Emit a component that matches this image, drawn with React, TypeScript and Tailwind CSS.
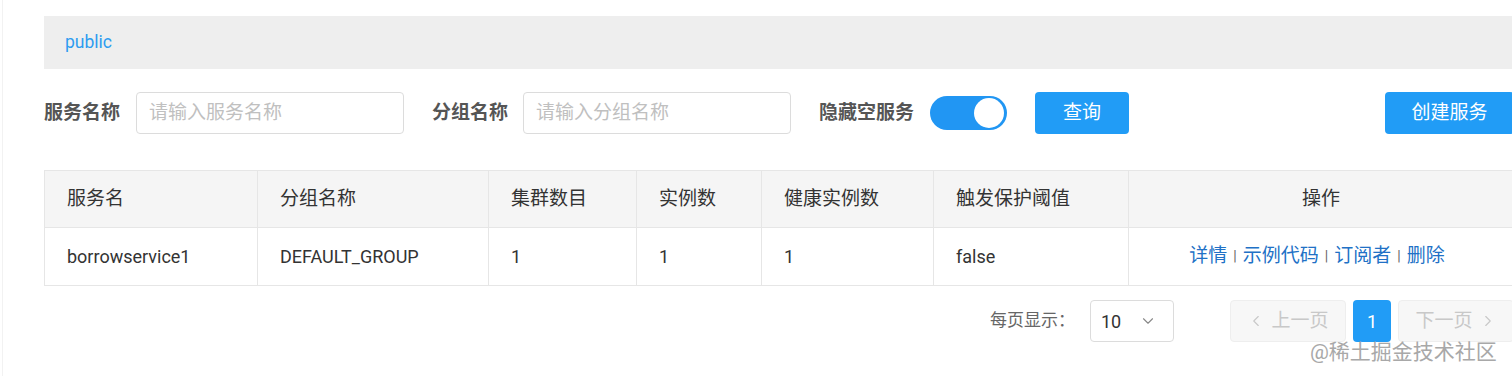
import { ChevronDown, ChevronLeft, ChevronRight } from 'lucide-react'

const FONT = "font-['Roboto','Noto_Sans_CJK_SC',sans-serif]"

const columns = [
  { title: '服务名', width: 'w-[213px]' },
  { title: '分组名称', width: 'w-[231px]' },
  { title: '集群数目', width: 'w-[148px]' },
  { title: '实例数', width: 'w-[125px]' },
  { title: '健康实例数', width: 'w-[172px]' },
  { title: '触发保护阈值', width: 'w-[195px]' },
]

const row = ['borrowservice1', 'DEFAULT_GROUP', '1', '1', '1', 'false']

function Label({ children }: { children: React.ReactNode }) {
  return <span className="text-[19px] font-bold text-[#555] whitespace-nowrap">{children}</span>
}

function TextInput({ placeholder }: { placeholder: string }) {
  return (
    <div className="w-[268px] h-[42px] border border-[#dcdcdc] rounded-[4px] flex items-center px-3 text-[19px] text-[#c0c0c0]">
      {placeholder}
    </div>
  )
}

export default function App() {
  const ops = ['详情', '示例代码', '订阅者', '删除']

  return (
    <div className={`relative w-[1512px] h-[376px] overflow-hidden bg-white ${FONT}`}>
      <div className="absolute left-[2px] top-0 bottom-0 w-px bg-[#f2f2f2]" />
      <div className="w-[1470px] ml-[44px] pt-[16px]">
        {/* breadcrumb bar */}
        <div className="h-[53px] bg-[#eeeeee] flex items-center pl-[21px]">
          <span className="text-[17.5px] text-[#2d9cf0]">public</span>
        </div>

        {/* filter row */}
        <div className="mt-[23px] h-[42px] flex items-center">
          <Label>服务名称</Label>
          <div className="ml-[16px]">
            <TextInput placeholder="请输入服务名称" />
          </div>
          <div className="ml-[28px]">
            <Label>分组名称</Label>
          </div>
          <div className="ml-[15px]">
            <TextInput placeholder="请输入分组名称" />
          </div>
          <div className="ml-[28px]">
            <Label>隐藏空服务</Label>
          </div>
          <div className="ml-[16px] w-[77px] h-[34px] rounded-full bg-[#2196f3] flex items-center justify-end pr-[3px]">
            <div className="w-[30px] h-[30px] rounded-full bg-white" />
          </div>
          <button className="ml-[28px] w-[94px] h-[42px] rounded-[4px] bg-[#219cf6] text-white text-[19px]">
            查询
          </button>
          <button className="ml-auto w-[129px] h-[42px] rounded-[4px] bg-[#219cf6] text-white text-[19px]">
            创建服务
          </button>
        </div>

        {/* table */}
        <div className="mt-[36px] border border-[#e6e6e6]">
          <div className="flex h-[57px] bg-[#f5f5f5] border-b border-[#e6e6e6] text-[19px] text-[#333]">
            {columns.map((c) => (
              <div key={c.title} className={`${c.width} shrink-0 border-r border-[#e6e6e6] flex items-center pl-[22px]`}>
                {c.title}
              </div>
            ))}
            <div className="flex-1 flex items-center justify-center">操作</div>
          </div>
          <div className="flex h-[57px] text-[18px] text-[#333]">
            {row.map((v, i) => (
              <div key={i} className={`${columns[i].width} shrink-0 border-r border-[#e6e6e6] flex items-center pl-[22px]`}>
                {v}
              </div>
            ))}
            <div className="flex-1 flex items-center justify-center pr-[8px] text-[19px] text-[#2171c6]">
              {ops.map((op, i) => (
                <span key={op} className="flex items-center">
                  {i > 0 && <span className="mx-[6px] text-[14px] text-[#666]">|</span>}
                  {op}
                </span>
              ))}
            </div>
          </div>
        </div>

        {/* pagination */}
        <div className="mt-[14px] h-[42px] flex items-center">
          <span className="ml-[946px] text-[17px] text-[#666]">每页显示：</span>
          <div className="ml-[15px] w-[84px] h-[42px] border border-[#dcdcdc] rounded-[4px] flex items-center justify-between pl-[10px] pr-[16px] text-[18px] text-[#333]">
            <span>10</span>
            <ChevronDown className="w-[18px] h-[18px] text-[#888]" strokeWidth={1.5} />
          </div>
          <div className="ml-[56px] w-[116px] h-[42px] border border-[#eeeeee] bg-[#f7f7f7] rounded-[4px] flex items-center justify-center gap-[6px] text-[19px] text-[#c8c8c8]">
            <ChevronLeft className="w-[18px] h-[18px]" strokeWidth={1.5} />
            <span>上一页</span>
          </div>
          <div className="ml-[7px] w-[38px] h-[42px] rounded-[4px] bg-[#219cf6] flex items-center justify-center text-[18px] text-white">
            1
          </div>
          <div className="ml-[7px] w-[116px] h-[42px] border border-[#eeeeee] bg-[#f7f7f7] rounded-[4px] flex items-center justify-center gap-[6px] text-[19px] text-[#c8c8c8]">
            <span>下一页</span>
            <ChevronRight className="w-[18px] h-[18px]" strokeWidth={1.5} />
          </div>
        </div>
      </div>

      {/* watermark */}
      <div className="absolute left-[1310px] top-[337px] text-[21px] text-[#a8a8a8] whitespace-nowrap">
        @稀土掘金技术社区
      </div>
    </div>
  )
}
